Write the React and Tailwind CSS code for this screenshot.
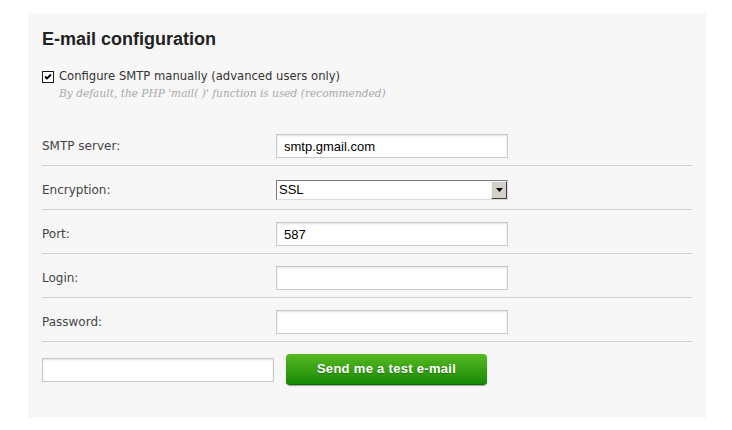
import React, { useState } from 'react';

const label = "text-[12px] text-[#444] font-['DejaVu_Sans',sans-serif]";
const field =
    "w-[232px] h-[24px] bg-white border border-[#c8c8c8] shadow-[inset_0_1px_2px_rgba(0,0,0,0.12)] px-[7px] text-[13px] text-black font-['Liberation_Sans',Arial,sans-serif] outline-none";

function Row({ name, children }) {
    return (
        <div className="flex items-center pt-[12px] pb-[7px] border-b border-[#cfcfcf]">
            <span className={`${label} w-[234px]`}>{name}</span>
            {children}
        </div>
    );
}

export default function App() {
    const [manual, setManual] = useState(true);
    const [server, setServer] = useState('smtp.gmail.com');
    const [port, setPort] = useState('587');
    const [login, setLogin] = useState('');
    const [password, setPassword] = useState('');
    const [testMail, setTestMail] = useState('');

    return (
        <div className="w-[732px] h-[430px] bg-white pt-[13px] pl-[28px]">
            <div className="w-[678px] h-[405px] bg-[#f7f7f7] px-[14px] pt-[14px]">
                <h1 className="text-[18px] font-bold text-[#222] leading-[24px] font-['Liberation_Sans',Arial,sans-serif]">
                    E-mail configuration
                </h1>

                {/* smtp toggle */}
                <div className="mt-[17px] flex items-start gap-[5px]">
                    <button
                        type="button"
                        onClick={() => setManual(!manual)}
                        className="mt-[3px] w-[12px] h-[12px] border border-[#1c1c1c] bg-white flex items-center justify-center shrink-0"
                    >
                        {manual && (
                            <svg width="8" height="8" viewBox="0 0 8 8">
                                <path d="M1 3.5 L3 5.5 L7 1.5" stroke="#000" strokeWidth="1.8" fill="none" />
                            </svg>
                        )}
                    </button>
                    <div>
                        <div className="text-[11.6px] leading-[16px] text-[#333] font-['DejaVu_Sans',sans-serif]">
                            Configure SMTP manually (advanced users only)
                        </div>
                        <div className="mt-[2px] text-[10.6px] leading-[14px] italic text-[#a8a8a8] font-['DejaVu_Serif',serif]">
                            By default, the PHP 'mail( )' function is used (recommended)
                        </div>
                    </div>
                </div>

                <div className="mt-[22px] w-[650px]">
                    <Row name="SMTP server:">
                        <input className={field} value={server} onChange={(e) => setServer(e.target.value)} />
                    </Row>
                    <Row name="Encryption:">
                        <div className="my-[2px] w-[232px] h-[20px] flex bg-white border border-t-[#7a7a7a] border-l-[#7a7a7a] border-r-[#dcdcdc] border-b-[#dcdcdc]">
                            <span className="flex-1 px-[2px] text-[13px] leading-[18px] text-black font-['Liberation_Sans',Arial,sans-serif]">SSL</span>
                            <span className="w-[16px] h-[18px] bg-[#d4d0c8] border border-t-[#f4f4f4] border-l-[#f4f4f4] border-r-[#404040] border-b-[#404040] flex items-center justify-center">
                                <svg width="7" height="4" viewBox="0 0 7 4">
                                    <path d="M0 0 H7 L3.5 4 Z" fill="#000" />
                                </svg>
                            </span>
                        </div>
                    </Row>
                    <Row name="Port:">
                        <input className={field} value={port} onChange={(e) => setPort(e.target.value)} />
                    </Row>
                    <Row name="Login:">
                        <input className={field} value={login} onChange={(e) => setLogin(e.target.value)} />
                    </Row>
                    <Row name="Password:">
                        <input type="password" className={field} value={password} onChange={(e) => setPassword(e.target.value)} />
                    </Row>

                    <div className="flex items-center gap-[12px] pt-[12px]">
                        <input className={field} value={testMail} onChange={(e) => setTestMail(e.target.value)} />
                        <button
                            type="button"
                            className="w-[201px] h-[31px] rounded-[4px] bg-gradient-to-b from-[#55ba22] to-[#138a04] border-b border-[#0d6a03] shadow-[0_1px_1px_rgba(0,0,0,0.35)] text-white text-[13px] font-bold tracking-[0.3px] [text-shadow:0_1px_1px_rgba(0,0,0,0.3)] font-['Liberation_Sans',Arial,sans-serif]"
                        >
                            Send me a test e-mail
                        </button>
                    </div>
                </div>
            </div>
        </div>
    );
}
